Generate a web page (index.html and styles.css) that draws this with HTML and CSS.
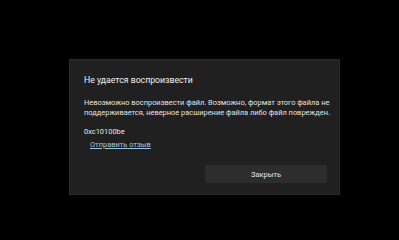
FILE: index.html
```html
<!DOCTYPE html>
<html lang="ru">
<head>
    <meta charset="UTF-8">
    <title>Не удается воспроизвести</title>
    <link rel="stylesheet" href="styles.css">
</head>
<body>
    <div class="dialog">
        <h1 class="title">Не удается воспроизвести</h1>
        <p class="message">Невозможно воспроизвести файл. Возможно, формат этого файла не поддерживается, неверное расширение файла либо файл поврежден.</p>
        <div class="code">0xc10100be</div>
        <a class="feedback" href="#">Отправить отзыв</a>
        <div class="actions">
            <button class="close-btn">Закрыть</button>
        </div>
    </div>
</body>
</html>
```

FILE: styles.css
```css
html, body {
    background-color: #000;
}
body {
    margin: 0;
    padding: 59px 0 0 69px;
    font-family: Roboto, 'Noto Sans', sans-serif;
    color: #e6e6e6;
}
.dialog {
    box-sizing: border-box;
    width: 271px;
    height: 136px;
    background-color: #202020;
    border: 1px solid #2a2a2a;
    padding: 14px 6px 0 14px;
    display: flex;
    flex-direction: column;
}
.title {
    margin: 0;
    font-size: 8.7px;
    font-weight: normal;
    line-height: 13px;
    color: #f0f0f0;
}
.message {
    margin: 11px 0 0;
    font-size: 7.45px;
    line-height: 10px;
    color: #e0e0e0;
}
.code {
    margin-top: 9px;
    font-size: 7.45px;
    line-height: 10px;
}
.feedback {
    margin: 3px 0 0 6px;
    align-self: flex-start;
    font-size: 7.45px;
    line-height: 10px;
    color: #9cc8e6;
}
.actions {
    display: flex;
    justify-content: flex-end;
    margin: 15px 6px 0 0;
}
.close-btn {
    width: 122px;
    height: 18px;
    border: none;
    border-radius: 2px;
    background-color: #2d2d2d;
    color: #e6e6e6;
    font-family: inherit;
    font-size: 7.45px;
    padding: 0;
}
```
